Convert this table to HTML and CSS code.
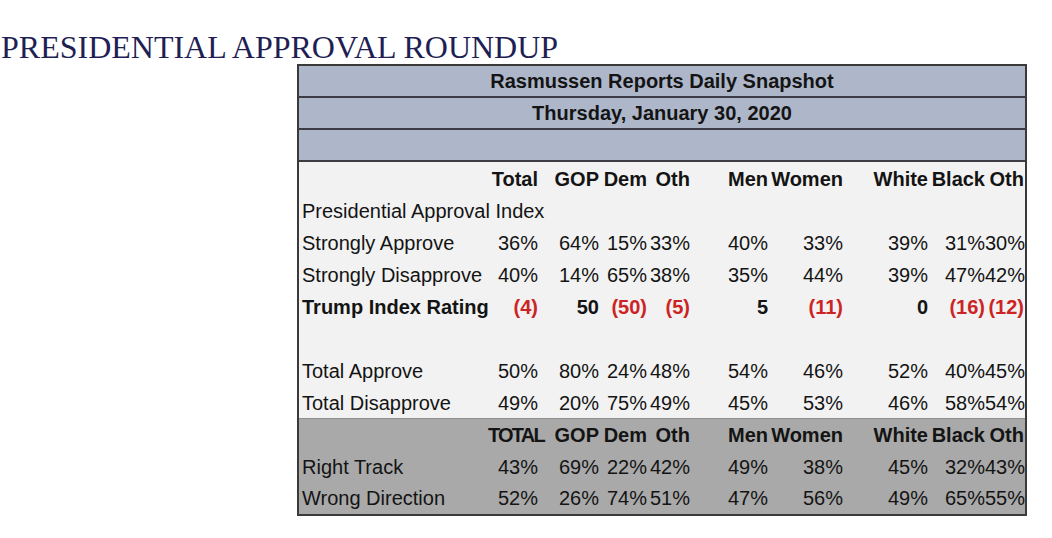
FILE: index.html
```html
<!DOCTYPE html>
<html>
<head>
<meta charset="utf-8">
<link rel="stylesheet" href="styles.css">
</head>
<body>
<h1 class="title">PRESIDENTIAL APPROVAL ROUNDUP</h1>
<div class="snapshot">
  <div class="band">Rasmussen Reports Daily Snapshot</div>
  <div class="band">Thursday, January 30, 2020</div>
  <div class="band"></div>
  <div class="grid light">
    <div class="row head"><span></span><span>Total</span><span>GOP</span><span>Dem</span><span>Oth</span><span>Men</span><span>Women</span><span>White</span><span>Black</span><span>Oth</span></div>
    <div class="row"><span class="lab">Presidential Approval Index</span></div>
    <div class="row"><span class="lab">Strongly Approve</span><span>36%</span><span>64%</span><span>15%</span><span>33%</span><span>40%</span><span>33%</span><span>39%</span><span>31%</span><span>30%</span></div>
    <div class="row"><span class="lab">Strongly Disapprove</span><span>40%</span><span>14%</span><span>65%</span><span>38%</span><span>35%</span><span>44%</span><span>39%</span><span>47%</span><span>42%</span></div>
    <div class="row head"><span class="lab">Trump Index Rating</span><span class="neg">(4)</span><span>50</span><span class="neg">(50)</span><span class="neg">(5)</span><span>5</span><span class="neg">(11)</span><span>0</span><span class="neg">(16)</span><span class="neg">(12)</span></div>
    <div class="row"></div>
    <div class="row"><span class="lab">Total Approve</span><span>50%</span><span>80%</span><span>24%</span><span>48%</span><span>54%</span><span>46%</span><span>52%</span><span>40%</span><span>45%</span></div>
    <div class="row"><span class="lab">Total Disapprove</span><span>49%</span><span>20%</span><span>75%</span><span>49%</span><span>45%</span><span>53%</span><span>46%</span><span>58%</span><span>54%</span></div>
  </div>
  <div class="grid dark">
    <div class="row head"><span></span><span class="tight">TOTAL</span><span>GOP</span><span>Dem</span><span>Oth</span><span>Men</span><span>Women</span><span>White</span><span>Black</span><span>Oth</span></div>
    <div class="row"><span class="lab">Right Track</span><span>43%</span><span>69%</span><span>22%</span><span>42%</span><span>49%</span><span>38%</span><span>45%</span><span>32%</span><span>43%</span></div>
    <div class="row"><span class="lab">Wrong Direction</span><span>52%</span><span>26%</span><span>74%</span><span>51%</span><span>47%</span><span>56%</span><span>49%</span><span>65%</span><span>55%</span></div>
  </div>
</div>
</body>
</html>
```

FILE: styles.css
```css
html, body {
  margin: 0;
  padding: 0;
  background: #ffffff;
}
.title {
  margin: 0;
  padding: 30px 0 0 1px;
  height: 34px;
  font-family: "Liberation Serif", "Times New Roman", serif;
  font-weight: normal;
  font-size: 32px;
  line-height: 34px;
  color: #1f1f55;
}
.snapshot {
  margin-left: 297px;
  width: 726px;
  border: 2px solid #3a3a3a;
  font-family: "Liberation Sans", Arial, Helvetica, sans-serif;
  font-size: 20px;
  color: #141414;
}
.band {
  height: 30px;
  line-height: 31px;
  background: #aeb7ca;
  border-bottom: 2px solid #3c3c44;
  text-align: center;
  font-weight: bold;
}
.grid.light {
  background: #f2f2f2;
}
.grid.dark {
  background: #a9a9a9;
  border-top: 1px solid #8e8e8e;
}
.row {
  display: grid;
  grid-template-columns: 189px 50px 61px 48px 43px 78px 75px 85px 57px 39px;
  height: 32px;
  line-height: 34px;
  white-space: nowrap;
}
.dark .row {
  height: 31.7px;
  line-height: 32px;
}
.row span {
  text-align: right;
}
.row span.lab {
  text-align: left;
  padding-left: 3px;
}
.row.head span {
  font-weight: bold;
}
.row span.tight {
  letter-spacing: -1.8px;
  padding-right: 1px;
}
.neg {
  color: #cc2424;
}
```
